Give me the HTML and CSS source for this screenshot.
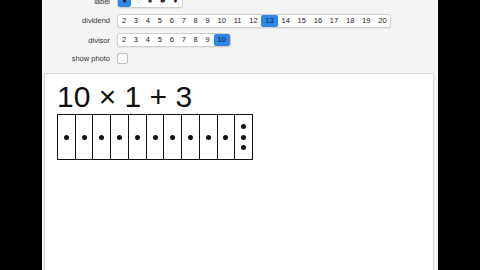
FILE: index.html
```html
<!DOCTYPE html>
<html lang="en">
<head>
    <meta charset="UTF-8">
    <title>Division with Remainder</title>
    <link rel="stylesheet" href="styles.css">
</head>
<body>
    <div class="page">
        <div class="controls">
            <div class="ctl-label">label</div>
            <div class="btn-group">
                <span class="btn sym selected">●</span>
                <span class="btn sym">♡</span>
                <span class="btn sym">♠</span>
                <span class="btn sym">♣</span>
                <span class="btn sym">♦</span>
            </div>

            <div class="ctl-label">dividend</div>
            <div class="btn-group" id="dividend"></div>

            <div class="ctl-label">divisor</div>
            <div class="btn-group" id="divisor"></div>

            <div class="ctl-label">show photo</div>
            <div><span class="checkbox"></span></div>
        </div>

        <div class="output">
            <div class="expr" id="expr"></div>
            <div class="tiles" id="tiles"></div>
        </div>
    </div>

    <script>
        const dividend = 13;
        const divisor = 10;

        function fillGroup(id, from, to, selected) {
            const group = document.getElementById(id);
            for (let n = from; n <= to; n++) {
                const b = document.createElement('span');
                b.className = 'btn' + (n === selected ? ' selected' : '');
                b.textContent = n;
                group.appendChild(b);
            }
        }

        fillGroup('dividend', 2, 20, dividend);
        fillGroup('divisor', 2, 10, divisor);

        const q = Math.floor(dividend / divisor);
        const r = dividend % divisor;
        document.getElementById('expr').textContent = divisor + ' \u00d7 ' + q + ' + ' + r;

        // uma peça por grupo, mais uma com o resto
        const tiles = document.getElementById('tiles');
        for (let i = 0; i < divisor + (r > 0 ? 1 : 0); i++) {
            const tile = document.createElement('div');
            tile.className = 'tile';
            const dots = i < divisor ? q : r;
            for (let d = 0; d < dots; d++) {
                const dot = document.createElement('span');
                dot.className = 'dot';
                tile.appendChild(dot);
            }
            tiles.appendChild(tile);
        }
    </script>
</body>
</html>
```

FILE: styles.css
```css
body {
    background: #000;
    margin: 0;
    padding: 0;
    height: 270px;
    overflow: hidden;
    font-family: "Liberation Sans", Arial, sans-serif;
}

.page {
    width: 396px;
    height: 270px;
    margin: 0 auto;
    background: #f4f4f4;
    display: flex;
    flex-direction: column;
}

.controls {
    display: grid;
    grid-template-columns: 68px auto;
    column-gap: 7px;
    row-gap: 5.5px;
    align-items: center;
    margin-top: -6px;
    height: 79px;
    flex-shrink: 0;
    align-content: start;
}

.ctl-label {
    text-align: right;
    font-size: 7.5px;
    color: #333;
}

.btn-group {
    display: inline-flex;
    justify-self: start;
    background: #fff;
    border: 1px solid #cfcfcf;
    border-radius: 3px;
    box-shadow: 0 1px 1px rgba(0,0,0,0.06);
    height: 12px;
}

.btn {
    padding: 0 3.9px;
    font-size: 7.5px;
    line-height: 12px;
    color: #222;
}

.btn.sym {
    width: 5px;
    text-align: center;
}

.btn.selected {
    background: #2f86e6;
    color: #123;
    border-radius: 2px;
}

.checkbox {
    display: block;
    width: 9px;
    height: 9px;
    background: #fff;
    border: 1px solid #bdbdbd;
    border-radius: 2px;
}

.output {
    flex: 1;
    margin: 0 4px 0 2px;
    background: #fff;
    border: 1px solid #d6d6d6;
    border-bottom: none;
    padding: 8px 12px;
}

.expr {
    font-size: 30px;
    line-height: 30px;
    color: #111;
}

.tiles {
    display: flex;
    margin-top: 2px;
    width: 196px;
    height: 46px;
    border: 1.5px solid #111;
    box-sizing: border-box;
}

.tile {
    flex: 1;
    display: flex;
    flex-direction: column;
    align-items: center;
    justify-content: space-evenly;
    border-left: 1.5px solid #111;
    padding: 3px 0;
}

.tile:first-child {
    border-left: none;
}

.dot {
    width: 5px;
    height: 5px;
    border-radius: 50%;
    background: #111;
}
```
